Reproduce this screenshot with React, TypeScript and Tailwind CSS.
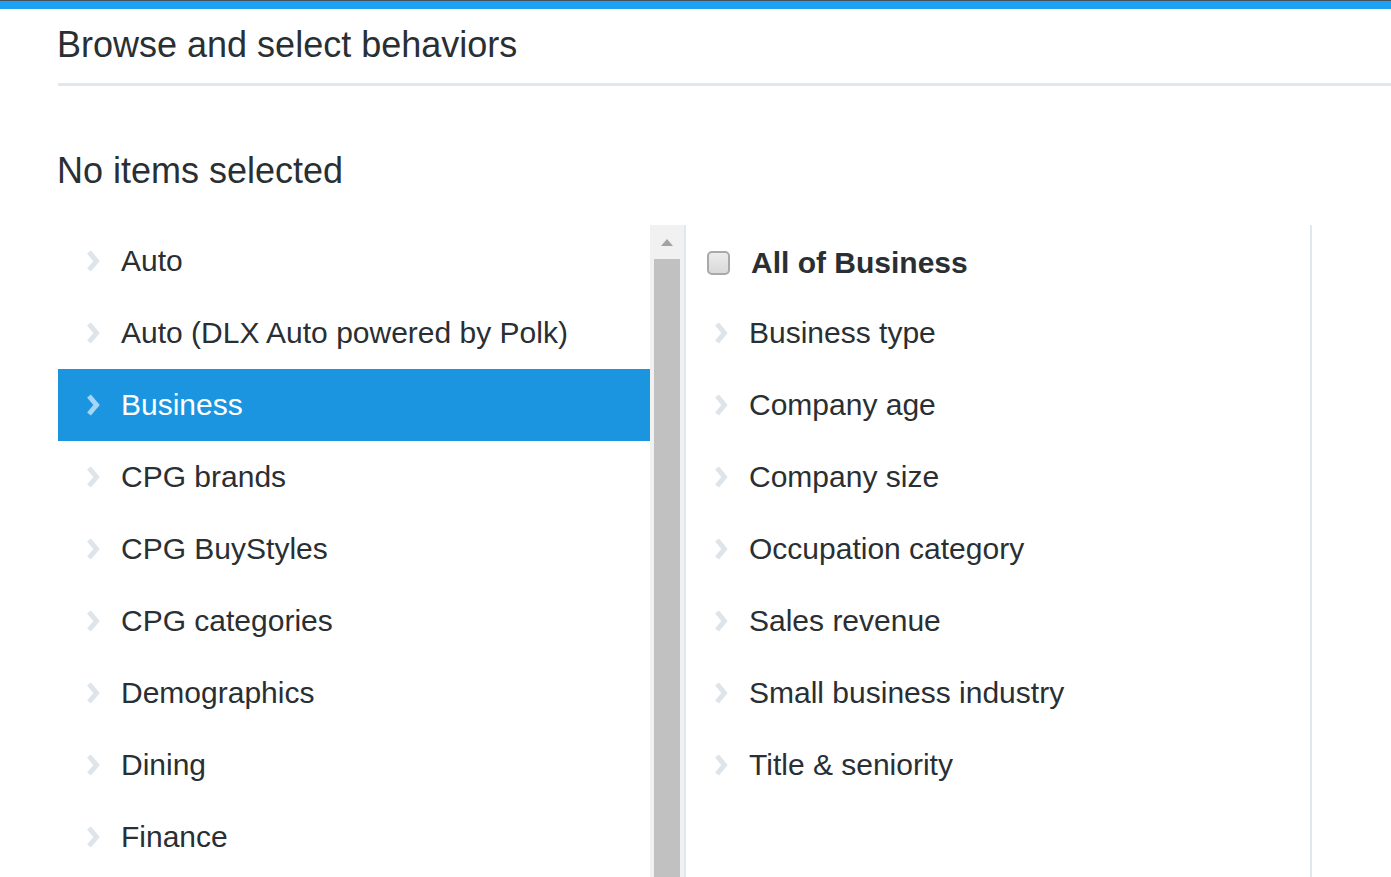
import React from "react";

const leftItems = [
  "Auto",
  "Auto (DLX Auto powered by Polk)",
  "Business",
  "CPG brands",
  "CPG BuyStyles",
  "CPG categories",
  "Demographics",
  "Dining",
  "Finance",
];

const rightItems = [
  "Business type",
  "Company age",
  "Company size",
  "Occupation category",
  "Sales revenue",
  "Small business industry",
  "Title & seniority",
];

function Chevron({ color }: { color: string }) {
  return (
    <svg width="14" height="24" viewBox="0 0 14 24" className="shrink-0">
      <polyline
        points="3,3 10.5,12 3,21"
        fill="none"
        stroke={color}
        strokeWidth="5"
        strokeLinecap="butt"
        strokeLinejoin="miter"
      />
    </svg>
  );
}

export default function App() {
  return (
    <div
      className="h-[877px] w-[1391px] overflow-hidden bg-white text-[#292f33]"
      style={{ fontFamily: '"Liberation Sans", Arial, sans-serif' }}
    >
      <div className="h-[1px] bg-[#45525c]" />
      <div className="h-[8px] bg-[#1da1f2]" />
      <div className="pl-[58px]">
        <div className="pt-[18px] pb-[20px] text-[36px] leading-[36px] -ml-[1px]">
          Browse and select behaviors
        </div>
        <div className="h-[3px] bg-[#e1e8ed]" />
        <div className="mt-[67px] mb-[36px] text-[36px] leading-[36px] -ml-[1px]">
          No items selected
        </div>
        <div className="flex">
          <div className="w-[592px] shrink-0">
            {leftItems.map((item) => {
              const sel = item === "Business";
              return (
                <div
                  key={item}
                  className={`flex h-[72px] items-center pl-[28px] text-[30px] ${
                    sel ? "bg-[#1b95e0] text-white" : ""
                  }`}
                >
                  <Chevron color={sel ? "#a6d5f6" : "#dde4ea"} />
                  <span className="ml-[21px] leading-[30px]">{item}</span>
                </div>
              );
            })}
          </div>
          <div className="relative flex w-[34px] shrink-0 flex-col items-center bg-[#f1f1f1]">
            <div className="flex h-[34px] w-full items-center justify-center">
              <svg width="12" height="7" viewBox="0 0 12 7">
                <polygon points="6,0 12,7 0,7" fill="#a3a3a3" />
              </svg>
            </div>
            <div className="h-[700px] w-[26px] bg-[#c1c1c1]" />
          </div>
          <div className="w-[2px] shrink-0 bg-[#e1e8ed]" />
          <div className="w-[626px] shrink-0 border-r-2 border-[#e1e8ed]">
            <div className="flex h-[72px] items-center pl-[21px] pt-[4px]">
              <div className="h-[24px] w-[23px] rounded-[5px] border-2 border-[#a9a9a9] bg-gradient-to-b from-[#ececec] to-[#d9d9d9]" />
              <span className="ml-[21px] text-[30px] font-bold leading-[30px]">
                All of Business
              </span>
            </div>
            {rightItems.map((item) => (
              <div
                key={item}
                className="flex h-[72px] items-center pl-[28px] text-[30px]"
              >
                <Chevron color="#dde4ea" />
                <span className="ml-[21px] leading-[30px]">{item}</span>
              </div>
            ))}
            <div className="h-[200px]" />
          </div>
        </div>
      </div>
    </div>
  );
}
